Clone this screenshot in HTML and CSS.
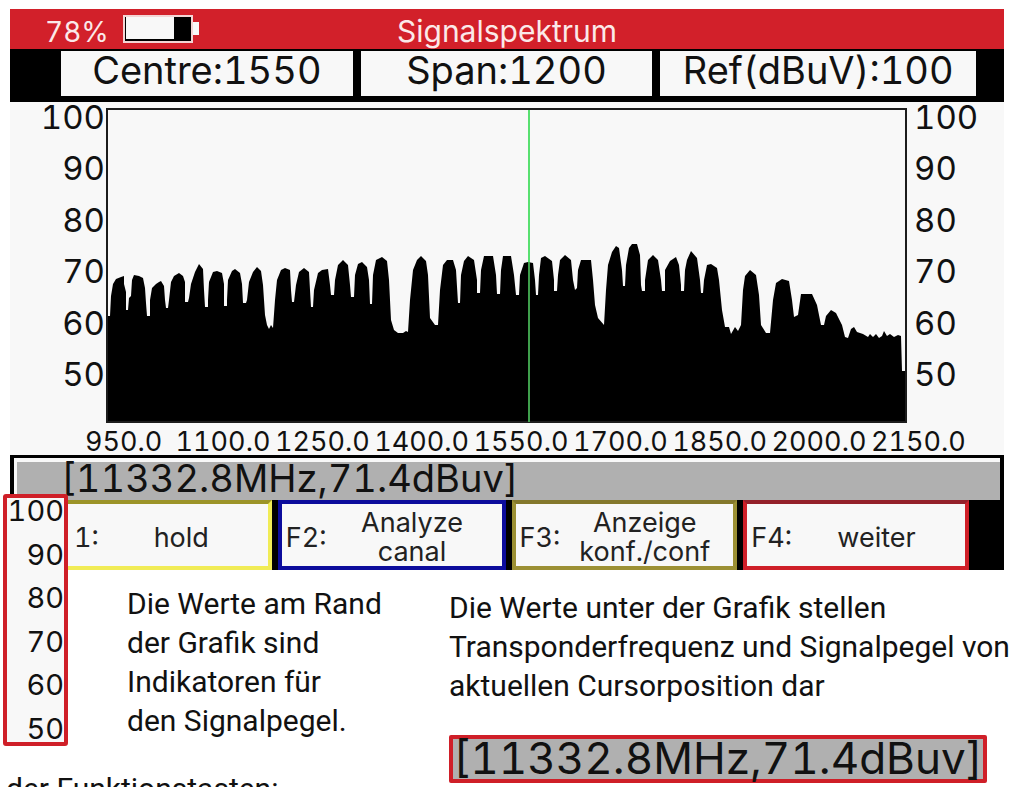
FILE: index.html
```html
<!DOCTYPE html>
<html lang="de">
    <head>
        <meta charset="utf-8">
        <title>Signalspektrum</title>
        <link rel="stylesheet" href="styles.css">
    </head>
    <body>
        <section class="device">
            <header class="titlebar">
                <span class="charge">78%</span>
                <svg class="battery" viewBox="0 0 76 28" width="76" height="28">
                    <rect x="1" y="1" width="68" height="26" fill="#000" stroke="#f3d5d5" stroke-width="2"/>
                    <rect x="3" y="2" width="48" height="22" fill="#f8f8f8"/>
                    <rect x="70" y="7" width="6" height="13" fill="#f8f8f8"/>
                </svg>
                <h1>Signalspektrum</h1>
            </header>

            <div class="settings">
                <div>Centre:1550</div>
                <div>Span:1200</div>
                <div>Ref(dBuV):100</div>
            </div>

            <div class="chart">
                <div class="axis axis-left">
                    <span>100</span><span>90</span><span>80</span><span>70</span><span>60</span><span>50</span>
                </div>
                <svg class="plot" viewBox="106 108 801 315" preserveAspectRatio="none">
                    <path d="M106,423 V316 H110 L111,296 113,284 116,279 121,277 124,276 124,284 126,292 126,310 128,310 129,298
                        131,296 132,280 134,275 139,276 143,278 145,288 146,303 147,316 150,316
                        150,300 152,288 156,284 159,282 161,281 164,286 165,300 166,308 168,308
                        169,300 171,282 174,276 179,273 183,276 185,282 185,302 188,302
                        189,298 191,284 195,272 199,264 203,269 204,290 205,307 208,307
                        208,300 209,282 213,272 217,271 222,273 224,284 224,306 227,306
                        227,300 228,280 232,271 235,269 240,273 242,284 243,303 246,303
                        247,300 249,282 253,272 257,267 261,271 263,285 265,315 267,325 269,329 271,325 273,328
                        275,300 277,280 281,270 285,268 290,270 291,290 292,302 294,302
                        296,285 299,272 304,268 309,272 310,290 311,307 313,307
                        314,290 318,273 322,270 328,269 330,285 331,295 334,295
                        335,280 338,265 343,260 348,265 350,285 351,297 354,297
                        355,275 358,264 362,262 367,267 369,280 370,304 372,304
                        373,275 376,260 382,257 387,261 389,280 391,320 394,330 398,333 403,333 406,331 408,332
                        410,300 413,270 417,260 421,256 426,261 428,275 430,318 435,325 438,325
                        440,290 443,265 447,260 453,260 456,270 458,303 460,303
                        461,275 464,261 468,256 474,260 477,280 477,293 480,293
                        481,270 484,256 493,256 496,275 497,294 500,294
                        501,270 503,256 511,256 514,275 516,295 519,295
                        520,275 524,263 528,262 533,263 535,280 536,295 538,295
                        539,275 541,258 545,256 552,261 554,280 554,291 557,291
                        558,275 560,260 565,255 571,260 573,280 575,290 577,288
                        578,270 581,260 591,260 593,280 595,305 598,318 604,325
                        606,290 608,265 612,252 616,246 619,248 622,270 623,286 625,286
                        626,265 629,248 632,244 637,244 640,255 641,285 642,291 645,291
                        645,280 648,260 653,255 658,260 661,280 662,291 665,291
                        665,270 670,261 676,257 679,265 681,285 681,291 684,291
                        685,270 687,260 691,251 697,258 700,280 701,293 703,293
                        704,280 707,265 711,264 717,268 719,280 722,310 725,327 729,327 731,334 735,327 738,331 741,325
                        743,290 745,276 750,270 756,275 759,295 761,325 766,333 770,333
                        773,300 776,283 782,279 789,281 792,300 794,317
                        798,315 801,294 812,294 817,305 821,325 824,325
                        826,316 831,310 836,313 842,325 845,337 848,338
                        851,329 854,327 857,332 863,334 868,337 870,334 873,337 876,334 879,338 882,336 884,331 887,336
                        890,334 894,337 898,335 901,336 902,371 H907 V423 Z"/>
                    <rect x="107" y="109" width="799" height="313" fill="none" stroke="#1c1c1c" stroke-width="2"/>
                    <line x1="529" y1="110" x2="529" y2="262" stroke="#58e070" stroke-width="2"/>
                    <line x1="529" y1="262" x2="529" y2="422" stroke="#3f9f4c" stroke-width="2"/>
                </svg>
                <div class="axis axis-right">
                    <span>100</span><span>90</span><span>80</span><span>70</span><span>60</span><span>50</span>
                </div>
            </div>
            <div class="frequencies">
                <span>950.0</span><span>1100.0</span><span>1250.0</span>
                <span>1400.0</span><span>1550.0</span><span>1700.0</span>
                <span>1850.0</span><span>2000.0</span><span>2150.0</span>
            </div>

            <div class="status">[11332.8MHz,71.4dBuv]</div>

            <div class="keys">
                <button class="key yellow"><span>1:</span><b>hold</b></button>
                <button class="key blue"><span>F2:</span><b>Analyze<br>canal</b></button>
                <button class="key olive"><span>F3:</span><b>Anzeige<br>konf./conf</b></button>
                <button class="key red"><span>F4:</span><b>weiter</b></button>
            </div>

            <div class="levels">
                <span>100</span><span>90</span><span>80</span><span>70</span><span>60</span><span>50</span>
            </div>
        </section>

        <section class="notes">
            <p>Die Werte am Rand<br>der Grafik sind<br>Indikatoren für<br>den Signalpegel.</p>
            <div>
                <p>Die Werte unter der Grafik stellen<br>Transponderfrequenz und Signalpegel von<br>aktuellen Cursorposition dar</p>
                <div class="readout">[11332.8MHz,71.4dBuv]</div>
            </div>
        </section>
        <p class="next">der Funktionstasten:</p>
    </body>
</html>
```
FILE: styles.css
```css
* {
    box-sizing: border-box;
}

body {
    margin: 0;
    padding-top: 9px;
    height: 100vh;
    overflow: hidden;
    background: #fff;
    color: #111;
    font-family: Roboto, sans-serif;
}

.device {
    position: relative;
    margin: 0 5px 0 10px;
    background: #f8f8f8;
    font-family: Inter, "Liberation Sans", sans-serif;
    font-variant-numeric: tabular-nums;
}

.titlebar {
    display: grid;
    grid-template-columns: 78px 1fr 1fr;
    align-items: center;
    height: 40px;
    padding-left: 35px;
    background: #d2202a;
    color: #fbe9e9;
    font-size: 28px;
}

.charge {
    padding-top: 6px;
}

.titlebar h1 {
    position: absolute;
    left: 0;
    right: 0;
    margin: 0;
    padding-top: 4px;
    text-align: center;
    font-size: 30px;
    font-weight: 400;
}

.settings {
    display: grid;
    grid-template-columns: 292fr 292fr 316fr;
    gap: 8px;
    padding: 2px 28px 6px 51px;
    background: #000;
}

.settings div {
    height: 45px;
    background: #f8f8f8;
    text-align: center;
    font-size: 38px;
    line-height: 38px;
}

.chart {
    display: grid;
    grid-template-columns: 96px 1fr 97px;
    height: 321px;
}

.plot {
    width: 100%;
    height: 315px;
    margin-top: 6px;
}

.axis {
    display: flex;
    flex-direction: column;
    justify-content: space-between;
    padding-bottom: 34px;
    font-size: 33px;
    line-height: 30px;
}

.axis-left {
    padding-right: 1px;
    text-align: right;
}

.axis-right {
    padding-left: 7px;
}

.frequencies {
    display: grid;
    grid-template-columns: repeat(9, 1fr);
    height: 32px;
    padding: 0 36px 0 64px;
    text-align: center;
    font-size: 27px;
    line-height: 38px;
}

.status {
    height: 45px;
    padding-left: 47px;
    border: solid #000;
    border-width: 3px 4px 0;
    background: #b0b0b0;
    box-shadow: inset 3px 4px #f8f8f8;
    font-size: 38px;
    line-height: 41px;
}

.keys {
    display: grid;
    grid-template-columns: 212fr 228fr 226fr 226fr;
    gap: 6px;
    height: 70px;
    padding: 0 35px 1px 50px;
    background: #000;
}

.key {
    display: grid;
    grid-template-columns: auto 1fr;
    align-items: center;
    padding: 4px 4px 0;
    border: 4px solid;
    background: #f8f8f8;
    color: #222;
    font: inherit;
    font-size: 27px;
    line-height: 29px;
}

.key b {
    font-weight: 400;
}

.yellow {
    padding-left: 10px;
    border-color: #9c9428 #f1ec56 #f1ec56;
}

.blue {
    border-color: #0c0c9c;
}

.olive {
    border-color: #84782c #9c9034 #9c9034;
}

.red {
    border-color: #94202a #cf1f28 #cf1f28;
}

/* enlarged level scale, lies over the lower left corner */
.levels {
    position: absolute;
    left: -7px;
    top: 485px;
    display: flex;
    flex-direction: column;
    justify-content: space-between;
    width: 65px;
    height: 252px;
    border: 4px solid #cf1f28;
    border-radius: 3px;
    background: #f8f8f8;
    text-align: right;
    font-size: 29px;
    line-height: 26px;
}

.notes {
    display: grid;
    grid-template-columns: 322px 1fr;
    padding: 14px 0 0 127px;
    font-size: 30px;
    line-height: 39px;
    white-space: nowrap;
}

.notes p {
    margin: 0;
}

.notes > div {
    padding-top: 4px;
}

.readout {
    width: fit-content;
    height: 48px;
    margin-top: 30px;
    border: 4px solid #cf1f28;
    border-radius: 2px;
    background: #b0b0b0;
    font-family: Inter, "Liberation Sans", sans-serif;
    font-size: 44px;
    font-variant-numeric: tabular-nums;
    line-height: 38px;
}

.next {
    margin: -4px 0 0;
    padding-left: 6px;
    font-size: 30px;
    line-height: 20px;
}
```
